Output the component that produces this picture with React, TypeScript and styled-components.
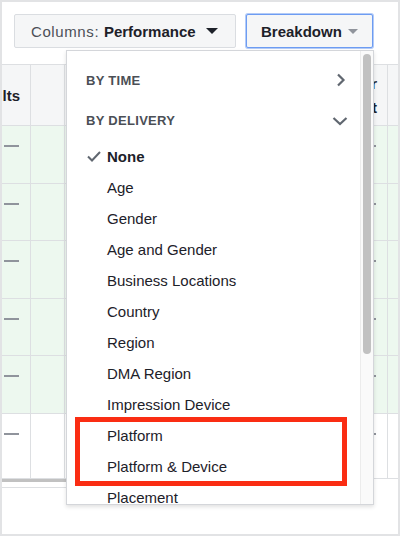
import styled, { createGlobalStyle } from "styled-components";

const GlobalStyle = createGlobalStyle`
  body {
    margin: 0;
    background: #fff;
    font-family: "Liberation Sans", Arial, sans-serif;
  }
`;

const Frame = styled.div`
  position: relative;
  width: 400px;
  height: 536px;
  box-sizing: border-box;
  border: 2px solid #e2e3e5;
  background: #fff;
  overflow: hidden;
`;

const Toolbar = styled.div`
  display: flex;
  gap: 10px;
  padding: 12px 0 0 12px;
`;

const Button = styled.button<{ $focused?: boolean; $width: number; $gap: number }>`
  display: flex;
  align-items: center;
  gap: ${(p) => p.$gap}px;
  box-sizing: border-box;
  width: ${(p) => p.$width}px;
  height: 34px;
  padding: 0 0 0 ${(p) => (p.$focused ? 14 : 16)}px;
  background: #f5f6f7;
  border: 1px solid ${(p) => (p.$focused ? "#6d9cf2" : "#dadde1")};
  box-shadow: ${(p) => (p.$focused ? "0 0 0 1px #b3cbf7" : "none")};
  border-radius: 2px;
  font-family: inherit;
  font-size: 15px;
  color: #1d2129;
  cursor: pointer;
`;

const Label = styled.span`
  white-space: nowrap;
`;

const Muted = styled.span`
  color: #4b4f56;
  letter-spacing: 0.6px;
`;

const Strong = styled.span`
  font-weight: bold;
`;

const Caret = styled.span<{ $light?: boolean }>`
  width: 0;
  height: 0;
  border-left: ${(p) => (p.$light ? 5 : 6)}px solid transparent;
  border-right: ${(p) => (p.$light ? 5 : 6)}px solid transparent;
  border-top: ${(p) => (p.$light ? "5px solid #90949c" : "6px solid #1d2129")};
`;

const Table = styled.div`
  display: grid;
  grid-template-columns: 29px 34px 1fr 14px 10px;
  grid-auto-rows: 57.5px;
  grid-template-rows: 61px;
  margin-top: 16px;
  border-top: 1px solid #dddfe2;
`;

const Cell = styled.div<{ $tone: "head" | "green" | "plain" }>`
  display: flex;
  justify-content: flex-end;
  align-items: ${(p) => (p.$tone === "head" ? "center" : "flex-start")};
  box-sizing: border-box;
  padding: ${(p) => (p.$tone === "head" ? "2px 10px 0 0" : "19px 11px 0 0")};
  overflow: hidden;
  background: ${(p) =>
    p.$tone === "head" ? "#f5f6f7" : p.$tone === "green" ? "#edf8ef" : "#fff"};
  border-right: 1px solid #dddfe2;
  border-bottom: 1px solid #dddfe2;
  font-size: 15px;
  font-weight: bold;
  color: #1d2129;
  white-space: nowrap;
  line-height: 24px;
  text-align: right;

  &:nth-child(5n) {
    border-right: none;
  }
`;

const HeadText = styled.div`
  flex-shrink: 0;
`;

const Dash = styled.span`
  flex-shrink: 0;
  width: 15px;
  height: 2px;
  background: #90949c;
`;

const LastRow = styled.div`
  display: contents;

  & > div {
    height: 65px;
  }
`;

const ScrollTrack = styled.div`
  width: 360px;
  height: 17px;
  padding-top: 3px;
  box-sizing: border-box;
  border-bottom: 1px solid #dddfe2;
`;

const ScrollThumbH = styled.div`
  width: 120px;
  height: 8px;
  background: #c1c1c1;
`;

const Dropdown = styled.div`
  position: absolute;
  left: 64px;
  top: 48px;
  width: 308px;
  height: 455px;
  box-sizing: border-box;
  display: flex;
  background: #fff;
  border: 1px solid #d4d6da;
  box-shadow: 0 2px 4px rgba(0, 0, 0, 0.12);
`;

const MenuList = styled.div`
  flex: 1;
  padding-top: 9px;
  overflow: hidden;
`;

const Section = styled.div`
  display: flex;
  align-items: center;
  justify-content: space-between;
  height: 40.5px;
  padding: 0 12px 0 19px;
  font-size: 13px;
  font-weight: bold;
  letter-spacing: 0.3px;
  color: #4b4f56;
`;

const Item = styled.div<{ $selected?: boolean; $inset?: boolean }>`
  display: flex;
  align-items: center;
  height: 31px;
  padding-left: ${(p) => (p.$inset ? 7 : 20)}px;
  font-size: 15px;
  color: #1d2129;
  font-weight: ${(p) => (p.$selected ? "bold" : "normal")};
  white-space: nowrap;
`;

const CheckSlot = styled.span`
  display: flex;
  align-items: center;
  width: 20px;
  flex-shrink: 0;
`;

const Highlight = styled.div`
  box-sizing: border-box;
  height: 69px;
  margin: -3px 13px -4px 8px;
  border: 5px solid #fa2d13;
`;

const HighlightInner = styled.div`
  margin-top: -2px;
`;

const VScroll = styled.div`
  width: 13px;
  flex-shrink: 0;
  padding: 3px 0 0 2px;
  box-sizing: border-box;
  background: #fafafa;
  border-left: 1px solid #ececec;
`;

const VThumb = styled.div`
  width: 8px;
  height: 300px;
  border-radius: 4px;
  background: #c1c1c1;
`;

const ChevronRight = () => (
  <svg width="16" height="14" viewBox="0 0 16 14">
    <path d="M6 1.5 L11.5 7 L6 12.5" fill="none" stroke="#606770" strokeWidth="2.2" />
  </svg>
);

const ChevronDown = () => (
  <svg width="16" height="10" viewBox="0 0 16 10">
    <path d="M1.5 2 L8 8 L14.5 2" fill="none" stroke="#606770" strokeWidth="2.2" />
  </svg>
);

const Check = () => (
  <svg width="14" height="11" viewBox="0 0 14 11">
    <path d="M1 5.5 L5 9.5 L13 1" fill="none" stroke="#606770" strokeWidth="2" />
  </svg>
);

const options = [
  "Age",
  "Gender",
  "Age and Gender",
  "Business Locations",
  "Country",
  "Region",
  "DMA Region",
  "Impression Device",
];

const rows: ("green" | "plain")[] = ["green", "green", "green", "green", "green"];

const DataRow = ({ tone }: { tone: "green" | "plain" }) => (
  <>
    <Cell $tone={tone}>
      <Dash />
    </Cell>
    <Cell $tone={tone} />
    <Cell $tone={tone} />
    <Cell $tone={tone}>
      <Dash />
    </Cell>
    <Cell $tone={tone} />
  </>
);

export default function App() {
  return (
    <>
      <GlobalStyle />
      <Frame>
        <Toolbar>
          <Button $width={222} $gap={10}>
            <Label>
              <Muted>Columns: </Muted>
              <Strong>Performance</Strong>
            </Label>
            <Caret />
          </Button>
          <Button $width={127} $gap={6} $focused>
            <Label>
              <Strong>Breakdown</Strong>
            </Label>
            <Caret $light />
          </Button>
        </Toolbar>

        <Table>
          <Cell $tone="head">
            <HeadText>Results</HeadText>
          </Cell>
          <Cell $tone="head" />
          <Cell $tone="head" />
          <Cell $tone="head">
            <HeadText>
              Cost per
              <br />
              Result
            </HeadText>
          </Cell>
          <Cell $tone="head" />
          {rows.map((tone, i) => (
            <DataRow key={i} tone={tone} />
          ))}
          <LastRow>
            <DataRow tone="plain" />
          </LastRow>
        </Table>
        <ScrollTrack>
          <ScrollThumbH />
        </ScrollTrack>

        <Dropdown>
          <MenuList>
            <Section>
              BY TIME
              <ChevronRight />
            </Section>
            <Section>
              BY DELIVERY
              <ChevronDown />
            </Section>
            <Item $selected>
              <CheckSlot>
                <Check />
              </CheckSlot>
              None
            </Item>
            {options.map((o) => (
              <Item key={o}>
                <CheckSlot />
                {o}
              </Item>
            ))}
            <Highlight>
              <HighlightInner>
                <Item $inset>
                  <CheckSlot />
                  Platform
                </Item>
                <Item $inset>
                  <CheckSlot />
                  Platform &amp; Device
                </Item>
              </HighlightInner>
            </Highlight>
            <Item>
              <CheckSlot />
              Placement
            </Item>
          </MenuList>
          <VScroll>
            <VThumb />
          </VScroll>
        </Dropdown>
      </Frame>
    </>
  );
}
